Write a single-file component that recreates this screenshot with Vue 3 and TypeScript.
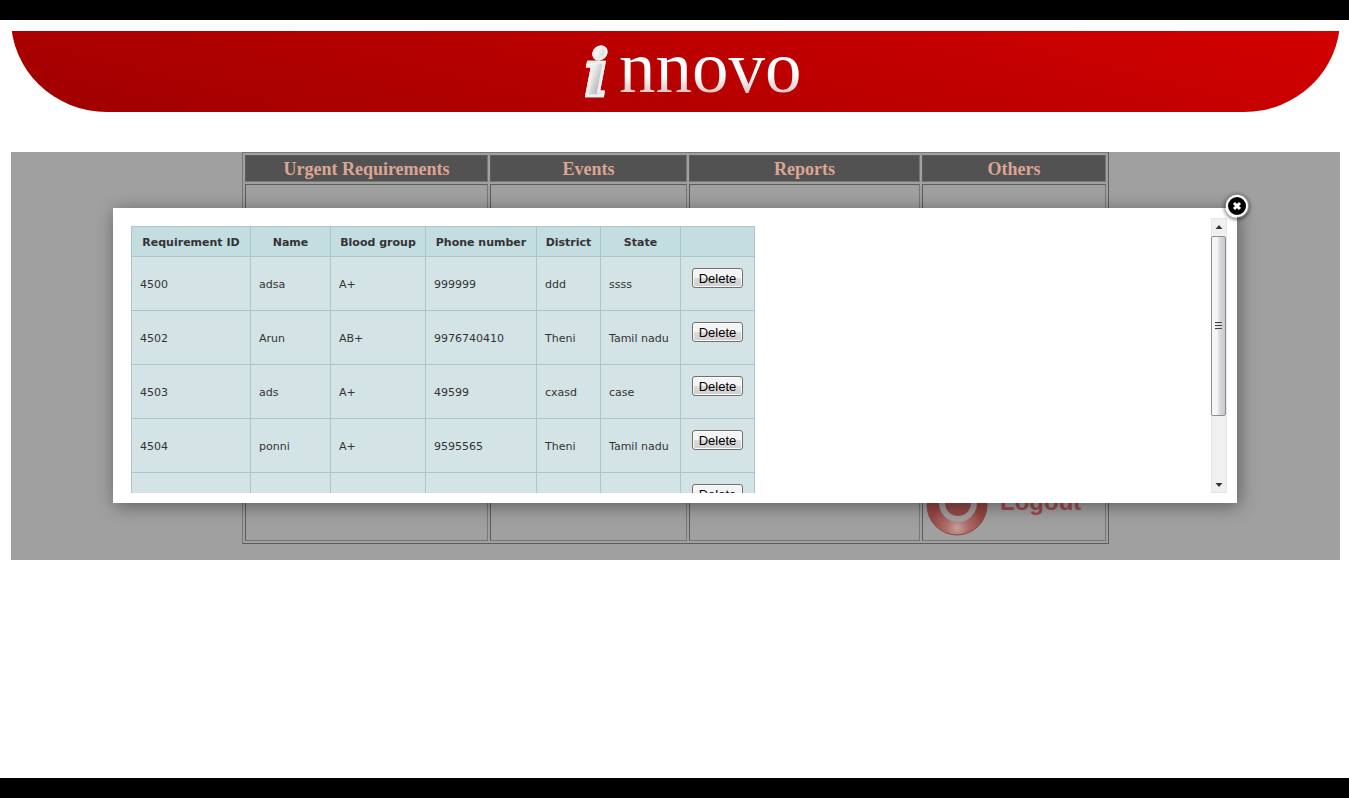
<script setup lang="ts">
interface Requirement {
  id: string
  name: string
  group: string
  phone: string
  district: string
  state: string
}

const sections: string[] = ['Urgent Requirements', 'Events', 'Reports', 'Others']
const headings: string[] = ['Requirement ID', 'Name', 'Blood group', 'Phone number', 'District', 'State', '']

const requirements: Requirement[] = [
  { id: '4500', name: 'adsa', group: 'A+', phone: '999999', district: 'ddd', state: 'ssss' },
  { id: '4502', name: 'Arun', group: 'AB+', phone: '9976740410', district: 'Theni', state: 'Tamil nadu' },
  { id: '4503', name: 'ads', group: 'A+', phone: '49599', district: 'cxasd', state: 'case' },
  { id: '4504', name: 'ponni', group: 'A+', phone: '9595565', district: 'Theni', state: 'Tamil nadu' },
  { id: '', name: '', group: '', phone: '', district: '', state: '' },
]
</script>

<template>
  <div class="page">
    <header class="banner">
      <h1 class="logo"><span class="logo-i">i</span><span class="logo-rest">nnovo</span></h1>
    </header>

    <main class="stage">
      <table class="menu">
        <colgroup>
          <col class="m1" /><col class="m2" /><col class="m3" /><col class="m4" />
        </colgroup>
        <thead>
          <tr><th v-for="s in sections" :key="s" scope="col">{{ s }}</th></tr>
        </thead>
        <tbody>
          <tr>
            <td></td>
            <td></td>
            <td></td>
            <td class="others">
              <a class="logout" href="#">
                <svg width="62" height="62" viewBox="0 0 62 62" aria-hidden="true">
                  <defs>
                    <radialGradient id="shine" cx="0.5" cy="0.88" r="0.46">
                      <stop offset="0" stop-color="#c4a09c" />
                      <stop offset="0.4" stop-color="#ad6b67" />
                      <stop offset="1" stop-color="#944441" />
                    </radialGradient>
                  </defs>
                  <circle cx="31" cy="31" r="30" fill="url(#shine)" stroke="#874a48" />
                  <circle cx="32" cy="29" r="16" fill="#944a48" stroke="#a49e9e" stroke-width="6" />
                </svg>
                <span>Logout</span>
              </a>
            </td>
          </tr>
        </tbody>
      </table>

      <section class="dialog" role="dialog" aria-label="Urgent Requirements">
        <button class="close" type="button" aria-label="Close">
          <svg width="24" height="24" viewBox="0 0 24 24" aria-hidden="true">
            <circle cx="12" cy="12" r="10" fill="#000" stroke="#fff" stroke-width="2" />
            <path d="M9 9l6 6M15 9l-6 6" stroke="#fff" stroke-width="3" />
          </svg>
        </button>
        <div class="viewport">
          <div class="content">
            <table class="list">
              <colgroup>
                <col class="c-id" /><col class="c-name" /><col class="c-group" /><col class="c-phone" />
                <col class="c-district" /><col class="c-state" /><col class="c-action" />
              </colgroup>
              <thead>
                <tr><th v-for="(h, i) in headings" :key="i" scope="col">{{ h }}</th></tr>
              </thead>
              <tbody>
                <tr v-for="(r, i) in requirements" :key="i">
                  <td>{{ r.id }}</td>
                  <td>{{ r.name }}</td>
                  <td>{{ r.group }}</td>
                  <td>{{ r.phone }}</td>
                  <td>{{ r.district }}</td>
                  <td>{{ r.state }}</td>
                  <td class="action"><button type="button">Delete</button></td>
                </tr>
              </tbody>
            </table>
          </div>
          <div class="scrollbar" aria-hidden="true">
            <svg class="arrow" width="16" height="18" viewBox="0 0 16 18"><path d="M4.500 11h7l-3.500-4z" fill="#333" /></svg>
            <div class="thumb"><i></i><i></i><i></i></div>
            <svg class="arrow" width="16" height="18" viewBox="0 0 16 18"><path d="M4.500 8h7l-3.500 4z" fill="#333" /></svg>
          </div>
        </div>
      </section>
    </main>
  </div>
</template>

<style>
body {
  margin: 0;
  background: #fff;
}
</style>

<style scoped>
.page {
  box-sizing: border-box;
  min-height: 100vh;
  padding: 11px 9px 0 11px;
  border-top: 20px solid #000;
  border-bottom: 20px solid #000;
  background: #fff;
}

.banner {
  position: relative;
  height: 81px;
  overflow: hidden;
}
.banner::before {
  content: '';
  position: absolute;
  inset: -12px 0 0;
  border-radius: 0 0 96px 96px / 0 0 93px 93px;
  background: linear-gradient(14deg, #a00000, #d40000);
}
.logo {
  position: relative;
  display: flex;
  justify-content: center;
  align-items: flex-start;
  gap: 10px;
  margin: 0;
  padding-left: 35px;
}
.logo span {
  color: transparent;
  background-clip: text;
  -webkit-background-clip: text;
}
.logo-i {
  font: italic bold 64px/83px "DejaVu Serif", serif;
  background-image: linear-gradient(110deg, #fff 35%, #bbb 62%, #fff 80%);
  -webkit-text-stroke: 3px #eee;
  paint-order: stroke fill;
}
.logo-rest {
  font: normal 73px/73px "Liberation Serif", "Times New Roman", serif;
  background-image: linear-gradient(#fff 60%, #dcc4c4 85%);
}

.stage {
  position: relative;
  margin-top: 40px;
  padding-bottom: 16px;
  background: #a0a0a0;
}

.menu {
  width: 867px;
  margin: 0 auto;
  table-layout: fixed;
  border: 1px solid;
  border-color: #777 #5c5c5c #5c5c5c #777;
  border-collapse: separate;
  border-spacing: 2px;
}
.m1 { width: 243px; }
.m2 { width: 197px; }
.m3 { width: 231px; }
.m4 { width: 184px; }
.menu th,
.menu td {
  box-sizing: border-box;
  padding: 0;
  border: 1px solid;
  border-color: #5c5c5c #777 #777 #5c5c5c;
}
.menu th {
  height: 27px;
  background: #525252;
  color: #dda594;
  font: bold 18px/20px "Liberation Serif", "Times New Roman", serif;
}
.menu td {
  height: 357px;
  vertical-align: bottom;
}
.menu .others {
  padding: 0 0 4px 3px;
}
.logout {
  display: flex;
  align-items: center;
  gap: 12px;
  color: #a1484e;
  font: bold 24px/28px "Liberation Sans", Arial, sans-serif;
  text-decoration: none;
}
.logout span {
  padding-bottom: 6px;
}

.dialog {
  position: absolute;
  top: 56px;
  right: 103px;
  left: 102px;
  padding: 10px;
  background: #fff;
  box-shadow: 2px 3px 17px rgba(0, 0, 0, 0.42);
}
.close {
  position: absolute;
  top: -14px;
  right: -12px;
  width: 24px;
  height: 24px;
  padding: 0;
  border: 0;
  border-radius: 50%;
  background: none;
  box-shadow: 0 1px 4px rgba(0, 0, 0, 0.7);
}
.close svg {
  display: block;
}
.viewport {
  display: flex;
  height: 275px;
  overflow: hidden;
}
.content {
  flex: 1;
  padding: 8px;
  overflow: hidden;
}

.list {
  width: 624px;
  table-layout: fixed;
  border-collapse: collapse;
  color: #333;
  font: 11px/14px Verdana, "DejaVu Sans", sans-serif;
}
.c-id { width: 119px; }
.c-name { width: 80px; }
.c-group { width: 95px; }
.c-phone { width: 111px; }
.c-district { width: 64px; }
.c-state { width: 80px; }
.c-action { width: 74px; }
.list th,
.list td {
  box-sizing: border-box;
  padding: 2px 8px 0;
  border: 1px solid #a9c6c9;
  white-space: nowrap;
}
.list th {
  height: 30px;
  padding: 2px 0 0;
  background: #c3dde0;
}
.list td {
  height: 54px;
  background: #d4e3e5;
}
.list .action {
  padding: 11px 11px 0;
  vertical-align: top;
}
.action button {
  display: block;
  width: 51px;
  height: 20px;
  padding: 1px 0 0;
  border: 1px solid #707070;
  border-radius: 3px;
  background: linear-gradient(#f4f4f4 50%, #dcdcdc 50%, #d0d0d0);
  box-shadow: inset 0 0 0 1px #fafafa;
  color: #000;
  font: 13px/17px "Liberation Sans", Arial, sans-serif;
}

.scrollbar {
  display: flex;
  flex-direction: column;
  box-sizing: border-box;
  width: 16px;
  background: #f0f0f0;
  box-shadow: inset 0 0 0 1px #e6e6e6;
}
.arrow {
  display: block;
}
.arrow:last-child {
  margin-top: auto;
}
.thumb {
  display: flex;
  flex-direction: column;
  align-items: center;
  justify-content: center;
  gap: 1px;
  box-sizing: border-box;
  width: 15px;
  height: 180px;
  border: 1px solid #8e8e93;
  border-radius: 2px;
  background: linear-gradient(90deg, #f6f6f6 40%, #dcdce0 55%, #c6c6cc);
}
.thumb i {
  width: 7px;
  height: 2px;
  background: linear-gradient(#444 50%, #ddd 50%);
}
</style>
